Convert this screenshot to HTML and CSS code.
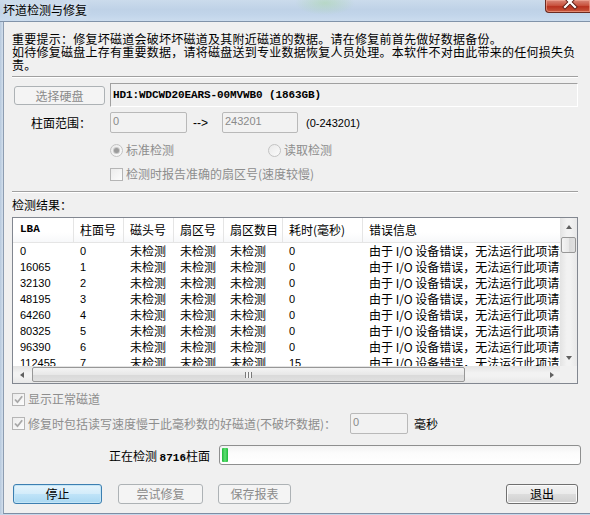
FILE: index.html
```html
<!DOCTYPE html>
<html lang="zh-CN">
<head>
<meta charset="utf-8">
<title>坏道检测与修复</title>
<link rel="stylesheet" href="styles.css">
</head>
<body>
<div class="window">
  <div class="titlebar">
    <span class="title">坏道检测与修复</span>
    <span class="close">
      <svg width="45" height="13" viewBox="0 0 45 13">
        <path d="M20 -3 L30 7 M30 -3 L20 7" stroke="#5a1a12" stroke-width="4" stroke-linecap="square"/>
        <path d="M20 -3 L30 7 M30 -3 L20 7" stroke="#ffffff" stroke-width="2.2" stroke-linecap="square"/>
      </svg>
    </span>
  </div>
  <div class="body">
    <div class="lframe"></div>
    <div class="client">
      <p class="notice">重要提示：修复坏磁道会破坏坏磁道及其附近磁道的数据。请在修复前首先做好数据备份。<br>如待修复磁盘上存有重要数据，请将磁盘送到专业数据恢复人员处理。本软件不对由此带来的任何损失负<br>责。</p>
      <div class="sep"></div>

      <div class="disk-row">
        <span class="btn disabled btn-select">选择硬盘</span>
        <div class="disk-box">HD1:WDCWD20EARS-00MVWB0 (1863GB)</div>
      </div>

      <div class="cyl-row">
        <span class="cyl-label">柱面范围：</span>
        <span class="field field-from">0</span>
        <span class="arrow-txt">--&gt;</span>
        <span class="field field-to">243201</span>
        <span class="range-txt">(0-243201)</span>
      </div>

      <div class="radio-row">
        <span class="radio-item first"><span class="radio checked"></span><span class="dis-label">标准检测</span></span>
        <span class="radio-item"><span class="radio"></span><span class="dis-label">读取检测</span></span>
      </div>

      <div class="check-row indent">
        <span class="checkbox"></span><span class="dis-label">检测时报告准确的扇区号(速度较慢)</span>
      </div>

      <div class="sep sep2"></div>
      <div class="result-label">检测结果：</div>

      <div class="list">
        <div class="list-main">
          <div class="grid head">
            <span class="lba-h">LBA</span><span>柱面号</span><span>磁头号</span><span>扇区号</span><span>扇区数目</span><span>耗时(毫秒)</span><span>错误信息</span>
          </div>
          <div class="rows">
            <div class="grid row"><span class="num">0</span><span class="num">0</span><span>未检测</span><span>未检测</span><span>未检测</span><span class="num">0</span><span class="err">由于 I/O 设备错误，无法运行此项请求。</span></div>
            <div class="grid row"><span class="num">16065</span><span class="num">1</span><span>未检测</span><span>未检测</span><span>未检测</span><span class="num">0</span><span class="err">由于 I/O 设备错误，无法运行此项请求。</span></div>
            <div class="grid row"><span class="num">32130</span><span class="num">2</span><span>未检测</span><span>未检测</span><span>未检测</span><span class="num">0</span><span class="err">由于 I/O 设备错误，无法运行此项请求。</span></div>
            <div class="grid row"><span class="num">48195</span><span class="num">3</span><span>未检测</span><span>未检测</span><span>未检测</span><span class="num">0</span><span class="err">由于 I/O 设备错误，无法运行此项请求。</span></div>
            <div class="grid row"><span class="num">64260</span><span class="num">4</span><span>未检测</span><span>未检测</span><span>未检测</span><span class="num">0</span><span class="err">由于 I/O 设备错误，无法运行此项请求。</span></div>
            <div class="grid row"><span class="num">80325</span><span class="num">5</span><span>未检测</span><span>未检测</span><span>未检测</span><span class="num">0</span><span class="err">由于 I/O 设备错误，无法运行此项请求。</span></div>
            <div class="grid row"><span class="num">96390</span><span class="num">6</span><span>未检测</span><span>未检测</span><span>未检测</span><span class="num">0</span><span class="err">由于 I/O 设备错误，无法运行此项请求。</span></div>
            <div class="grid row"><span class="num">112455</span><span class="num">7</span><span>未检测</span><span>未检测</span><span>未检测</span><span class="num">15</span><span class="err">由于 I/O 设备错误，无法运行此项请求。</span></div>
          </div>
        </div>
        <div class="vscroll">
          <span class="sb-btn"><span class="tri up"></span></span>
          <span class="vthumb"></span>
          <span class="vtrack"></span>
          <span class="sb-btn"><span class="tri down"></span></span>
        </div>
        <div class="hscroll">
          <span class="sb-btn"><span class="tri left"></span></span>
          <span class="hthumb"><span class="grip"></span></span>
          <span class="htrack"></span>
          <span class="sb-btn"><span class="tri right"></span></span>
        </div>
        <div class="corner"></div>
      </div>

      <div class="check-row check1">
        <span class="checkbox checked"><svg width="11" height="11" viewBox="0 0 11 11"><path d="M2 5.5 L4.5 8.2 L9.2 2.2" fill="none" stroke="#a8a8a8" stroke-width="1.8"/></svg></span><span class="dis-label">显示正常磁道</span>
      </div>

      <div class="slow-row">
        <span class="slow-label"><span class="checkbox checked"><svg width="11" height="11" viewBox="0 0 11 11"><path d="M2 5.5 L4.5 8.2 L9.2 2.2" fill="none" stroke="#a8a8a8" stroke-width="1.8"/></svg></span><span class="dis-label">修复时包括读写速度慢于此毫秒数的好磁道(不破坏数据)：</span></span>
        <span class="field field-ms">0</span>
        <span class="ms">毫秒</span>
      </div>

      <div class="progress-row">
        <span class="status">正在检测 <span class="mono">8716</span>柱面</span>
        <div class="progress"><span class="chunk"></span></div>
      </div>

      <div class="btn-row">
        <span class="btn default btn-stop">停止</span>
        <span class="btn disabled btn-try">尝试修复</span>
        <span class="btn disabled btn-save">保存报表</span>
        <span class="btn btn-exit">退出</span>
      </div>
    </div>
  </div>
</div>
</body>
</html>
```

FILE: styles.css
```css
* { box-sizing: border-box; }
html, body { margin: 0; padding: 0; }
body {
  font-family: "Noto Sans CJK SC", "Liberation Sans", sans-serif;
  font-size: 12px;
  color: #000;
  background: #c4d5e8;
}

.window {
  width: 590px;
  height: 515px;
  display: flex;
  flex-direction: column;
  overflow: hidden;
  background: #c6d7ea;
}

/* title bar */
.titlebar {
  height: 22px;
  flex: none;
  display: flex;
  align-items: flex-start;
  border-bottom: 1px solid #8193a9;
  background:
    radial-gradient(ellipse 30px 12px at 325px 3px, rgba(170, 215, 170, 0.55), rgba(170, 215, 170, 0) 100%),
    linear-gradient(180deg, #cbdbec 0%, #bfd2e7 45%, #c2d5ea 70%, #cbdcee 100%);
}
.title {
  padding: 2px 0 0 3px;
  line-height: 16px;
  font-size: 12px;
  color: #000;
  text-shadow: 0 0 6px rgba(255, 255, 255, 0.9);
}
.close {
  margin-left: auto;
  width: 45px;
  height: 13px;
  display: block;
  border: 1px solid #6b2a20;
  border-top: none;
  border-right: none;
  border-radius: 0 0 0 4px;
  background: linear-gradient(180deg, #d9887a 0%, #c9543f 45%, #b8321f 55%, #c8583e 100%);
  box-shadow: inset 0 0 0 1px rgba(255, 190, 170, 0.5);
  overflow: hidden;
}
.close svg { display: block; margin-left: -1px; }

.body {
  flex: 1;
  display: flex;
  padding-bottom: 1px;
}
.lframe {
  width: 3px;
  flex: none;
  background: linear-gradient(90deg, #b7c9dd, #d2dfed);
}
.client {
  flex: 1;
  background: #f0f0f0;
  border-left: 1px solid #8d9db1;
  border-bottom: 1px solid #7d8ea4;
  padding: 10px 12px 0 8px;
  display: flex;
  flex-direction: column;
}

.notice {
  margin: 0;
  line-height: 13px;
  font-size: 12px;
  letter-spacing: 0.25px;
  white-space: nowrap;
}

.sep {
  margin-top: 5px;
  height: 2px;
  flex: none;
  border-top: 1px solid #a0a0a0;
  border-bottom: 1px solid #ffffff;
}

/* buttons */
.btn {
  display: flex;
  align-items: center;
  justify-content: center;
  height: 20px;
  border: 1px solid #707070;
  border-radius: 3px;
  background: linear-gradient(180deg, #f2f2f2 0%, #ebebeb 48%, #dddddd 52%, #cfcfcf 100%);
  box-shadow: inset 0 0 0 1px #fbfbfb;
  font-size: 12px;
  line-height: 14px;
  color: #000;
}
.btn.disabled {
  border-color: #adb2b5;
  background: #f4f4f4;
  box-shadow: none;
  color: #8b8b8b;
}
.btn.default {
  border-color: #3c7fb1;
  background: linear-gradient(180deg, #e5f4fc 0%, #d3ecfa 48%, #bfe3f8 52%, #a9d8f2 100%);
  box-shadow: inset 0 0 0 1px #c4e5f6;
}

/* disk row */
.disk-row {
  margin-top: 5px;
  height: 24px;
  display: flex;
  align-items: center;
}
.btn-select {
  margin-left: 2px;
  width: 91px;
  height: 19px;
  margin-top: 1px;
}
.disk-box {
  margin-left: 5px;
  width: 468px;
  height: 24px;
  border: 1px solid;
  border-color: #a0a0a0 #ffffff #ffffff #a0a0a0;
  padding-left: 2px;
  display: flex;
  align-items: center;
  font-family: "Liberation Mono", monospace;
  font-weight: bold;
  font-size: 11px;
  letter-spacing: -0.1px;
}

/* cylinder range */
.cyl-row {
  margin-top: 5px;
  height: 21px;
  display: flex;
  align-items: center;
}
.cyl-label {
  width: 80px;
  text-align: right;
  padding-right: 1px;
}
.field {
  height: 21px;
  border: 1px solid #b9b9b9;
  border-radius: 2px;
  background: #f2f2f2;
  color: #8a8a8a;
  font-family: "Liberation Sans", sans-serif;
  font-size: 11px;
  line-height: 17px;
  padding-left: 2px;
}
.field-from { margin-left: 18px; width: 77px; }
.arrow-txt {
  margin-left: 6px;
  width: 29px;
  font-family: "Liberation Sans", sans-serif;
  font-size: 12px;
}
.field-to { width: 76px; }
.range-txt {
  margin-left: 8px;
  font-family: "Liberation Sans", sans-serif;
  font-size: 11px;
}

/* radios / checks */
.radio-row {
  margin-top: 9px;
  height: 16px;
  display: flex;
  align-items: center;
  padding-left: 98px;
}
.radio-item { display: flex; align-items: center; }
.radio-item.first { width: 158px; }
.radio {
  width: 13px;
  height: 13px;
  border-radius: 50%;
  border: 1px solid #c3c3c3;
  background: linear-gradient(135deg, #e9e9e9, #fbfbfb);
  display: flex;
  align-items: center;
  justify-content: center;
}
.radio.checked::after {
  content: "";
  width: 5px;
  height: 5px;
  border-radius: 50%;
  background: #9b9b9b;
  box-shadow: 0 0 0 1px #c9c9c9;
}
.dis-label {
  color: #8d8d8d;
  margin-left: 3px;
  line-height: 14px;
}

.check-row {
  margin-top: 8px;
  height: 16px;
  display: flex;
  align-items: center;
}
.check-row.indent { padding-left: 98px; }
.checkbox {
  width: 13px;
  height: 13px;
  flex: none;
  border: 1px solid #b5b5b5;
  background: linear-gradient(135deg, #ececec, #fcfcfc);
  display: flex;
  align-items: center;
  justify-content: center;
}
.checkbox svg { display: block; }

.sep2 { margin-top: 9px; }
.result-label {
  margin-top: 5px;
  line-height: 13px;
}

/* list view */
.list {
  margin-top: 6px;
  height: 167px;
  flex: none;
  border: 1px solid #828790;
  background: #fff;
  display: grid;
  grid-template-columns: 1fr 17px;
  grid-template-rows: 1fr 17px;
  overflow: hidden;
}
.list-main {
  overflow: hidden;
  position: relative;
}
.grid {
  display: grid;
  grid-template-columns: 61px 50px 50px 50px 59px 80px 240px;
  white-space: nowrap;
}
.head {
  height: 25px;
  border-bottom: 1px solid #e5e5e5;
  background: linear-gradient(180deg, #ffffff 0%, #ffffff 60%, #f7f8fa 100%);
}
.head span {
  border-right: 1px solid #e5e5e5;
  padding-left: 6px;
  line-height: 23px;
  overflow: hidden;
}
.head .lba-h {
  font-family: "Liberation Mono", monospace;
  font-weight: bold;
  font-size: 11px;
  padding-left: 7px;
}
.rows { overflow: hidden; }
.row {
  height: 16px;
  line-height: 16px;
}
.row span {
  padding-left: 6px;
  overflow: hidden;
}
.row span:first-child { padding-left: 7px; }
.row .num {
  font-family: "Liberation Sans", sans-serif;
  font-size: 11px;
}

/* scrollbars */
.vscroll {
  display: flex;
  flex-direction: column;
  background: linear-gradient(90deg, #e3e3e3, #f2f2f2 40%, #f2f2f2 60%, #e8e8e8);
}
.hscroll {
  display: flex;
  background: linear-gradient(180deg, #e3e3e3, #f2f2f2 40%, #f2f2f2 60%, #e8e8e8);
}
.corner { background: #f0f0f0; }
.sb-btn {
  width: 17px;
  height: 17px;
  flex: none;
  display: flex;
  align-items: center;
  justify-content: center;
}
.tri { width: 0; height: 0; border-style: solid; }
.tri.up { border-width: 0 3.5px 4px 3.5px; border-color: transparent transparent #606060 transparent; }
.tri.down { border-width: 4px 3.5px 0 3.5px; border-color: #606060 transparent transparent transparent; }
.tri.left { border-width: 3.5px 4px 3.5px 0; border-color: transparent #606060 transparent transparent; }
.tri.right { border-width: 3.5px 0 3.5px 4px; border-color: transparent transparent transparent #606060; }
.vthumb {
  margin: 2px 1px 0;
  height: 16px;
  border: 1px solid #979797;
  border-radius: 2px;
  background: linear-gradient(90deg, #f4f4f4, #e8e8e8 50%, #d9d9d9 51%, #e0e0e0);
}
.vtrack, .htrack { flex: 1; }
.hthumb {
  margin: 1px 0 1px 2px;
  width: 433px;
  border: 1px solid #979797;
  border-radius: 2px;
  background: linear-gradient(180deg, #f4f4f4, #e8e8e8 50%, #d9d9d9 51%, #e0e0e0);
  display: flex;
  align-items: center;
  justify-content: center;
}
.grip {
  width: 7px;
  height: 6px;
  background: repeating-linear-gradient(90deg, #7a7a7a 0 1px, #f4f4f4 1px 3px);
}

/* bottom */
.check1 { margin-top: 7px; }
.slow-row {
  margin-top: 6px;
  height: 21px;
  display: flex;
  align-items: center;
}
.slow-label {
  width: 338px;
  display: flex;
  align-items: center;
}
.field-ms { width: 58px; }
.ms { margin-left: 6px; }

.progress-row {
  margin-top: 11px;
  height: 20px;
  display: flex;
  align-items: center;
  margin-right: -3px;
}
.status {
  width: 207px;
  text-align: right;
  padding-right: 9px;
  white-space: nowrap;
}
.mono {
  font-family: "Liberation Mono", monospace;
  font-weight: bold;
  font-size: 11px;
}
.progress {
  flex: 1;
  height: 20px;
  border: 1px solid #8e8f8f;
  border-radius: 3px;
  background: linear-gradient(180deg, #f3f3f3, #fcfcfc 40%, #ffffff);
  padding: 2px;
  display: flex;
}
.chunk {
  width: 6px;
  border-radius: 1px;
  background: linear-gradient(90deg, #1fb83b, #5ee072 50%, #1fb83b);
}

.btn-row {
  margin-top: 19px;
  height: 20px;
  display: flex;
}
.btn-stop { margin-left: 1px; width: 89px; }
.btn-try { margin-left: 16px; width: 85px; }
.btn-save { margin-left: 15px; width: 73px; }
.btn-exit { margin-left: auto; width: 72px; }
```
